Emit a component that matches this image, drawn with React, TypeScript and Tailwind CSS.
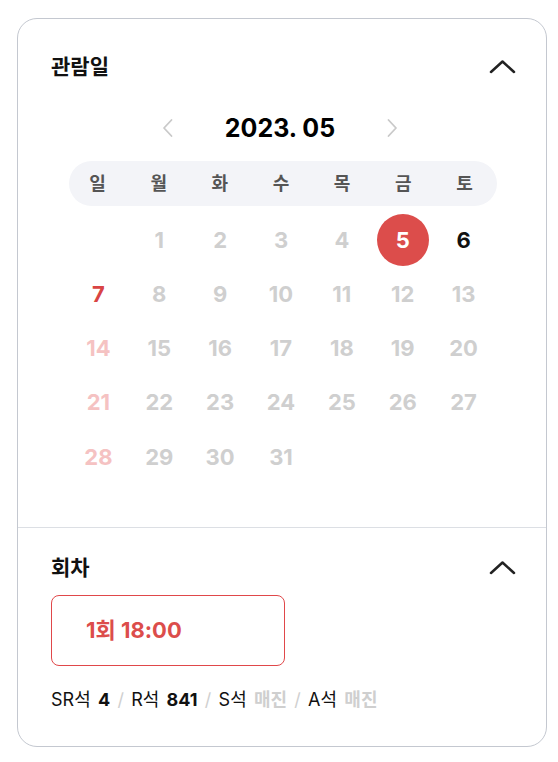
import React from "react";

const FONT = { fontFamily: 'Inter, "Noto Sans CJK KR", sans-serif' };

function ChevronUp() {
  return (
    <svg width="27" height="15" viewBox="0 0 27 15" fill="none">
      <polyline points="2,13 13.5,2.5 25,13" stroke="#222" strokeWidth="2.5" strokeLinecap="round" strokeLinejoin="round" />
    </svg>
  );
}

function NavChevron({ dir }: { dir: "left" | "right" }) {
  return (
    <svg width="11" height="20" viewBox="0 0 11 20" fill="none">
      <polyline
        points={dir === "left" ? "9.5,2 2,10 9.5,18" : "1.5,2 9,10 1.5,18"}
        stroke="#c9c9c9"
        strokeWidth="1.8"
        strokeLinecap="round"
        strokeLinejoin="round"
      />
    </svg>
  );
}

const weekdays = ["일", "월", "화", "수", "목", "금", "토"];

type Cell = { d: number | null; cls: string; selected?: boolean };

function buildCells(): Cell[] {
  const cells: Cell[] = [{ d: null, cls: "" }];
  for (let d = 1; d <= 31; d++) {
    let cls = "text-[#cfcfcf]";
    if (d === 6) cls = "text-[#111]";
    if (d === 7) cls = "text-[#d94444]";
    if (d === 14 || d === 21 || d === 28) cls = "text-[#f5c2c2]";
    cells.push({ d, cls, selected: d === 5 });
  }
  return cells;
}

export default function App() {
  const cells = buildCells();
  return (
    <div className="min-h-[762px] w-[558px] bg-white pt-[18px] pl-[17px]" style={FONT}>
      <div className="w-[530px] h-[729px] rounded-[20px] border border-[#c4c8d0] bg-white flex flex-col overflow-hidden">
        {/* Section 1 */}
        <div className="h-[509px] border-b border-[#dcdfe4] pt-[34px]">
          <div className="flex items-center justify-between h-[26px] pl-[33px] pr-[30px]">
            <span className="text-[21px] font-bold text-[#111] leading-none">관람일</span>
            <ChevronUp />
          </div>
          <div className="mt-[34px] h-[30px] flex items-center justify-center">
            <div className="flex items-center gap-[52px] ml-[-4px]">
              <NavChevron dir="left" />
              <span className="text-[25px] font-bold text-black leading-none">2023. 05</span>
              <NavChevron dir="right" />
            </div>
          </div>
          <div className="mt-[18px] ml-[51px] w-[428px] h-[45px] rounded-full bg-[#f3f4f8] grid grid-cols-7 items-center">
            {weekdays.map((w) => (
              <span key={w} className="text-center text-[18px] font-bold text-[#555] -translate-x-[2px]">
                {w}
              </span>
            ))}
          </div>
          <div className="mt-[7px] ml-[50px] w-[426px] grid grid-cols-7 auto-rows-[54.25px]">
            {cells.map((c, i) => (
              <div key={i} className="flex items-center justify-center">
                {c.d !== null &&
                  (c.selected ? (
                    <div className="w-[52px] h-[52px] rounded-full bg-[#dc4d4b] flex items-center justify-center text-white text-[22px] font-bold">
                      {c.d}
                    </div>
                  ) : (
                    <span className={`text-[22px] font-bold ${c.cls}`}>{c.d}</span>
                  ))}
              </div>
            ))}
          </div>
        </div>
        {/* Section 2 */}
        <div className="pt-[26px] pl-[33px] pr-[30px]">
          <div className="flex items-center justify-between h-[26px]">
            <span className="text-[21px] font-bold text-[#111] leading-none">회차</span>
            <ChevronUp />
          </div>
          <div className="mt-[15px] w-[234px] h-[71px] rounded-[8px] border border-[#e0484a] flex items-center pl-[34px]">
            <span className="text-[22px] font-bold text-[#dc4d4b]">1회 18:00</span>
          </div>
          <div className="mt-[22px] text-[18px] leading-[24px] text-[#111] whitespace-pre [word-spacing:2.2px]">
            <span>SR석 </span>
            <span className="font-bold">4</span>
            <span className="text-[#d0d0d0]"> / </span>
            <span>R석 </span>
            <span className="font-bold">841</span>
            <span className="text-[#d0d0d0]"> / </span>
            <span>S석 </span>
            <span className="font-bold text-[#cfcfcf]">매진</span>
            <span className="text-[#d0d0d0]"> / </span>
            <span>A석 </span>
            <span className="font-bold text-[#cfcfcf]">매진</span>
          </div>
        </div>
      </div>
    </div>
  );
}
